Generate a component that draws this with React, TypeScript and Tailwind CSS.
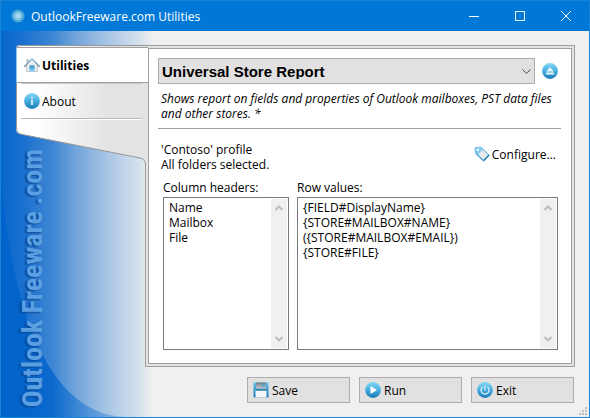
import { useState } from "react";
import type { ReactNode } from "react";

function Orb({ id, children }: { id: string; children: ReactNode }) {
  return (
    <svg viewBox="0 0 16 16" className="size-4 shrink-0" aria-hidden="true">
      <defs>
        <linearGradient id={id} x1="0" y1="0" x2="0" y2="1">
          <stop offset="0" stopColor="#86d8f5" />
          <stop offset="0.500" stopColor="#45aede" />
          <stop offset="1" stopColor="#1a7ab8" />
        </linearGradient>
      </defs>
      <circle cx="8" cy="8" r="7.900" fill={`url(#${id})`} />
      {children}
    </svg>
  );
}

function AtIcon() {
  return (
    <svg viewBox="0 0 14 14" className="size-3.5 shrink-0" aria-hidden="true">
      <circle cx="7" cy="7" r="6.500" fill="#4aa8d6" />
      <circle cx="7" cy="7" r="3.800" fill="#6bbbe0" />
      <circle cx="7" cy="7" r="1.500" fill="none" stroke="#d4effb" strokeWidth="0.900" />
      <path d="M8.500 5.200v2.600c0 1.400 2 1 2-.9A3.500 3.500 0 1 0 9 10" fill="none" stroke="#c4e6f5" strokeWidth="0.800" />
    </svg>
  );
}

function HouseIcon() {
  return (
    <svg viewBox="0 0 16 16" className="size-4 shrink-0" aria-hidden="true">
      <defs>
        <linearGradient id="door" x1="0" y1="0" x2="0" y2="1">
          <stop offset="0" stopColor="#2b8cc6" />
          <stop offset="1" stopColor="#7fd6f6" />
        </linearGradient>
        <linearGradient id="roof" x1="0" y1="0" x2="0" y2="1">
          <stop offset="0" stopColor="#8fcbe8" />
          <stop offset="1" stopColor="#7d8c96" />
        </linearGradient>
      </defs>
      <path d="M2.500 2h2v4h-2z" fill="#b3bbc1" />
      <path d="M2.500 8.500 8 3l5.500 5.500V14.500h-11z" fill="#e6eaec" stroke="#b0b6ba" strokeWidth="0.700" />
      <path d="M5.500 8.500h5v6h-5z" fill="url(#door)" />
      <path d="M0.800 9.300 8 2l7.200 7.300" fill="none" stroke="url(#roof)" strokeWidth="1.600" strokeLinecap="round" />
      <path d="M3.500 8.200 8 3.600l4.500 4.600" fill="none" stroke="#f4f6f7" strokeWidth="0.900" />
    </svg>
  );
}

function TagIcon() {
  return (
    <svg viewBox="0 0 16 16" className="size-4 shrink-0" aria-hidden="true">
      <path d="M1 1.800 7 1l8 8-5.500 5.700L1.500 7z" fill="#7fcdf0" stroke="#6cbde3" />
      <path d="m9.500 14.700 5.500-5.700" stroke="#1576b3" strokeWidth="1.500" />
      <path d="m1.500 7.200 8 7.600" stroke="#2a8fc9" />
      <path d="M8.500 3.800 13.800 9l-4.400 4.400L4.300 8.500z" fill="#e6eaec" stroke="#cfdae0" strokeWidth="0.600" />
      <circle cx="3.700" cy="3.800" r="1.200" fill="#fff" />
    </svg>
  );
}

function SaveIcon() {
  return (
    <svg viewBox="0 0 16 16" className="size-4 shrink-0" aria-hidden="true">
      <defs>
        <linearGradient id="disk" x1="0" y1="0" x2="0" y2="1">
          <stop offset="0" stopColor="#62c3eb" />
          <stop offset="1" stopColor="#1b78b3" />
        </linearGradient>
        <linearGradient id="shutter" x1="0" y1="0" x2="0" y2="1">
          <stop offset="0" stopColor="#6f7b82" />
          <stop offset="1" stopColor="#c0c9ce" />
        </linearGradient>
      </defs>
      <path d="M0.500 0.500h15v15h-14l-1-1z" fill="url(#disk)" />
      <path d="M3 0.500h10v6H3z" fill="url(#shutter)" />
      <path d="M9.500 1.500h2v3.500h-2z" fill="#4aa9d8" />
      <path d="M2.500 8.500h11v7h-11z" fill="#f2f4f5" />
      <path d="M2.500 8h11" stroke="#2f6f96" />
    </svg>
  );
}

function Chevron({ up = false }: { up?: boolean }) {
  return (
    <svg viewBox="0 0 8 6" className="h-1.5 w-2" aria-hidden="true">
      <path d={up ? "M0.500 5 4 1.500 7.500 5" : "M0.500 1 4 4.500 7.500 1"} fill="none" stroke="#bdbdbd" strokeWidth="2" />
    </svg>
  );
}

function TextField({ id, label, value, className }: { id: string; label: string; value: string; className: string }) {
  const [text, setText] = useState(value);
  return (
    <div className={`flex min-w-0 flex-col ${className}`}>
      <label htmlFor={id} className="mb-0.5">{label}</label>
      <div className="flex min-h-36 flex-1 border border-[#7a7a7a] bg-white p-px">
        <textarea
          id={id}
          value={text}
          onChange={(e) => setText(e.target.value)}
          wrap="off"
          className="min-w-0 flex-1 resize-none overflow-hidden pt-px pl-1 leading-[15px] outline-none"
        />
        <div className="flex w-4 flex-col items-center justify-between bg-[#f0f0f0] py-1.5">
          <Chevron up />
          <Chevron />
        </div>
      </div>
    </div>
  );
}

function ActionButton({ icon, children }: { icon: ReactNode; children: ReactNode }) {
  return (
    <button type="button" className="flex h-[26px] w-[103px] items-center gap-[3px] border border-[#adadad] bg-[#e1e1e1] pl-[5px]">
      {icon}
      {children}
    </button>
  );
}

function Backdrop() {
  return (
    <div className="absolute inset-y-0 left-0 w-[152px] overflow-hidden bg-[linear-gradient(to_right,#0567cb_0%,#1a70cf_14%,#3d86d3_34%,#74a6db_50%,#a3c2e3_68%,#d3e0ed_90%,#f0f0f0_100%)]">
      <svg viewBox="0 0 152 386" preserveAspectRatio="none" className="size-full" aria-hidden="true">
        <defs>
          <linearGradient id="swoosh" x1="0" y1="0" x2="1" y2="0">
            <stop offset="0" stopColor="#0062cb" />
            <stop offset="0.400" stopColor="#0b69cd" />
            <stop offset="1" stopColor="#9dc0e4" />
          </linearGradient>
        </defs>
        <path d="M0 150C8 230 30 386 128 386H0z" fill="url(#swoosh)" />
      </svg>
      <div className="absolute bottom-2.5 left-3 rotate-180 font-['Roboto_Condensed','Roboto',sans-serif] text-[28px] leading-10 font-bold whitespace-nowrap text-[#5b9fe3] [text-shadow:-1px_-2px_2px_#0b478f] [writing-mode:vertical-rl]">
        Outlook Freeware .com
      </div>
    </div>
  );
}

function Sidebar() {
  return (
    <nav className="relative z-10 -mr-[3px] w-[132px] shrink-0">
      <svg viewBox="0 0 132 120" className="absolute top-0 left-0 h-[120px] w-[132px]" aria-hidden="true">
        <defs>
          <linearGradient id="card" x1="0" y1="0" x2="1" y2="0">
            <stop offset="0.150" stopColor="#ffffff" />
            <stop offset="0.700" stopColor="#e3e3e3" />
          </linearGradient>
        </defs>
        <path d="M132 0H4Q0 0 0 4V84Q0 88 4 89L124 113Q129 114 129.500 119H132z" fill="url(#card)" />
        <path d="M132 0.500H4Q0.500 0.500 0.500 4V84Q0.500 88 4 89L124 113Q129.500 114 129.500 120" fill="none" stroke="#969696" />
      </svg>
      <div className="relative flex flex-col pt-0.5">
        <a href="#utilities" className="flex h-9 items-center gap-0.5 border-y border-l border-[#a0a0a0] border-l-[#8cc4f2] bg-white pl-[7px] font-bold">
          <HouseIcon />
          Utilities
        </a>
        <a href="#about" className="mr-1.5 ml-[5px] flex h-9 items-center gap-0.5 border-t border-b border-[#b8b8b8] border-t-[#c8c8c8] pl-[3px] shadow-[0_1px_0_#fff]">
          <Orb id="info">
            <path d="M8 6.800V12M8 3.800v1.800" stroke="#d9f1fb" strokeWidth="1.800" />
          </Orb>
          About
        </a>
      </div>
    </nav>
  );
}

export default function App() {
  return (
    <div className="flex min-h-screen flex-col border border-[#1883d7] bg-[#f0f0f0] font-['Open_Sans',sans-serif] text-[12px] leading-[15px] text-black">
      <header className="flex h-[30px] items-center bg-[#0078d7] pl-2.5 text-white">
        <AtIcon />
        <h1 className="ml-1.5 flex-1">OutlookFreeware.com Utilities</h1>
        <button type="button" aria-label="Minimize" className="grid h-full w-[46px] place-items-center">
          <svg viewBox="0 0 10 10" className="size-2.5"><path d="M0 5.500h10" stroke="#fff" /></svg>
        </button>
        <button type="button" aria-label="Maximize" className="grid h-full w-[46px] place-items-center">
          <svg viewBox="0 0 10 10" className="size-2.5"><path d="M0.500 0.500h9v9h-9z" fill="none" stroke="#fff" /></svg>
        </button>
        <button type="button" aria-label="Close" className="grid h-full w-[46px] place-items-center">
          <svg viewBox="0 0 10 10" className="size-2.5"><path d="m0 0 10 10M10 0 0 10" stroke="#fff" /></svg>
        </button>
      </header>

      <div className="relative flex flex-1 flex-col">
        <Backdrop />
        <div className="relative flex flex-1 px-3.5 pt-3.5 pl-[15px]">
          <Sidebar />
          <main className="flex min-w-0 flex-1 flex-col border border-[#a0a0a0] bg-[#e3e3e3] p-0.5">
            <div className="flex flex-1 flex-col border border-[#a0a0a0] bg-white pt-[9px] pr-2.5 pb-[13px] pl-[9px]">
              <div className="flex items-center gap-[7px] pr-[3px]">
                <div className="relative min-w-0 flex-1">
                  <select
                    aria-label="Utility"
                    className="h-[26px] w-full appearance-none border border-[#adadad] bg-[#e1e1e1] pl-[3px] font-['Liberation_Sans',sans-serif] text-[15px] font-bold"
                  >
                    <option>Universal Store Report</option>
                  </select>
                  <svg viewBox="0 0 9 5" className="pointer-events-none absolute top-[11px] right-1 h-[5px] w-[9px]" aria-hidden="true">
                    <path d="M0.500 0.500 4.500 4.300 8.500 0.500" fill="none" stroke="#444" />
                  </svg>
                </div>
                <button type="button" aria-label="Collapse">
                  <Orb id="eject">
                    <path d="M8 4.300 12 8.500H4zM4 9.500h8v2H4z" fill="#eef8fc" />
                  </Orb>
                </button>
              </div>

              <p className="border-b border-[#a0a0a0] pt-[7px] pb-[7px] pl-[3px] italic">
                Shows report on fields and properties of Outlook mailboxes, PST data files and other stores. *
              </p>

              <div className="flex items-start justify-between pt-[13px] pr-[5px] pl-[3px]">
                <p className="whitespace-pre-line">{"'Contoso' profile\nAll folders selected."}</p>
                <button type="button" className="mt-1 flex items-center gap-0.5">
                  <TagIcon />
                  Configure...
                </button>
              </div>

              <div className="flex flex-1 gap-2 pt-2 pr-[3px] pl-[5px]">
                <TextField id="headers" label="Column headers:" value={"Name\nMailbox\nFile"} className="w-[126px] shrink-0" />
                <TextField
                  id="values"
                  label="Row values:"
                  value={"{FIELD#DisplayName}\n{STORE#MAILBOX#NAME}\n({STORE#MAILBOX#EMAIL})\n{STORE#FILE}"}
                  className="flex-1"
                />
              </div>
            </div>
          </main>
        </div>

        <footer className="relative flex justify-end gap-[9px] px-[15px] pt-2.5 pb-3.5">
          <ActionButton icon={<SaveIcon />}>Save</ActionButton>
          <ActionButton
            icon={
              <Orb id="play">
                <path d="M5.500 4 12 8l-6.500 4z" fill="#fff" />
              </Orb>
            }
          >
            Run
          </ActionButton>
          <ActionButton
            icon={
              <Orb id="power">
                <path d="M5.500 5A4 4 0 1 0 10.500 5M8 3.500V8.500" fill="none" stroke="#e6f5fc" strokeWidth="1.200" />
              </Orb>
            }
          >
            Exit
          </ActionButton>
          <svg viewBox="0 0 8 8" className="absolute right-0.5 bottom-0.5 size-2" aria-hidden="true">
            <path d="M6 0h2v2H6zM3 3h2v2H3zM6 3h2v2H6zM0 6h2v2H0zM3 6h2v2H3zM6 6h2v2H6z" fill="#bfbfbf" />
          </svg>
        </footer>
      </div>
    </div>
  );
}
